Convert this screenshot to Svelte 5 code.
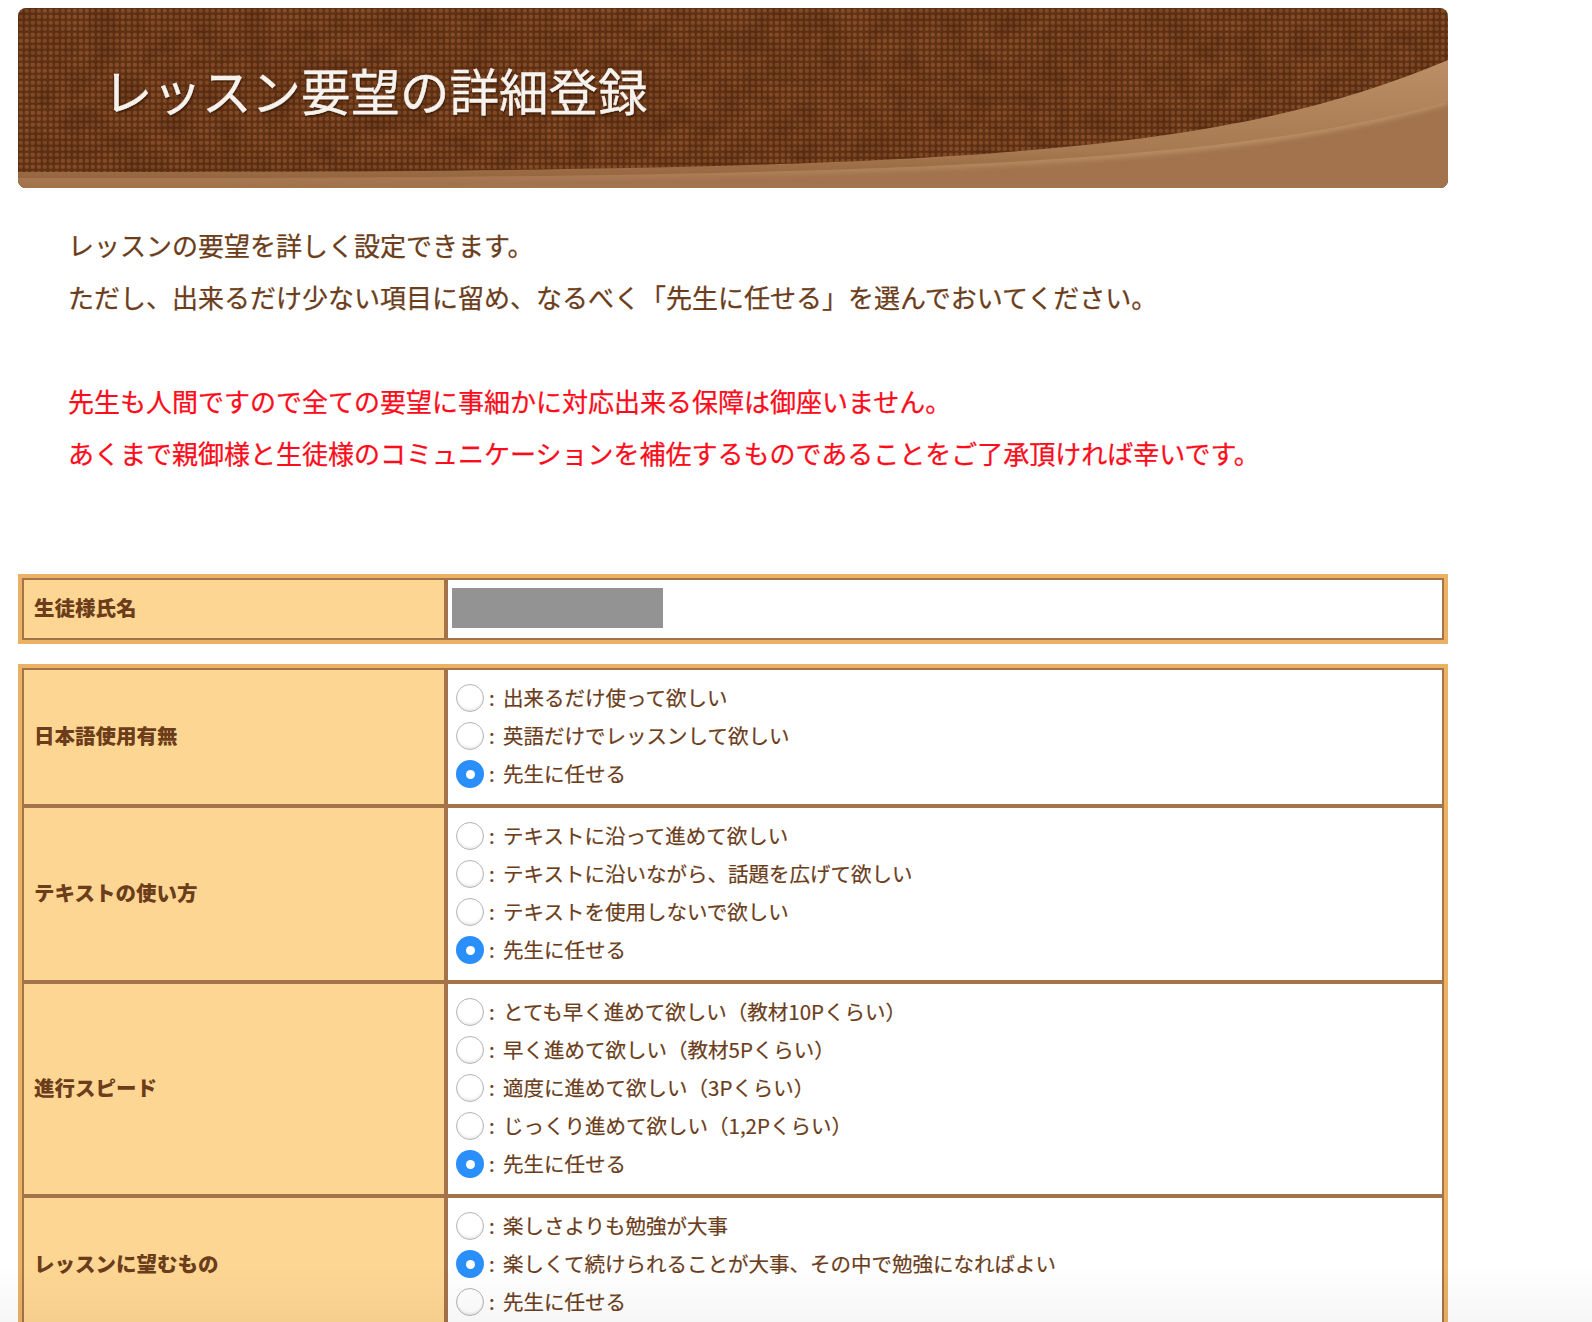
<script>
  const groups = [
    {
      label: "日本語使用有無",
      options: ["出来るだけ使って欲しい", "英語だけでレッスンして欲しい", "先生に任せる"],
      selected: 2,
    },
    {
      label: "テキストの使い方",
      options: [
        "テキストに沿って進めて欲しい",
        "テキストに沿いながら、話題を広げて欲しい",
        "テキストを使用しないで欲しい",
        "先生に任せる",
      ],
      selected: 3,
    },
    {
      label: "進行スピード",
      options: [
        "とても早く進めて欲しい（教材10Pくらい）",
        "早く進めて欲しい（教材5Pくらい）",
        "適度に進めて欲しい（3Pくらい）",
        "じっくり進めて欲しい（1,2Pくらい）",
        "先生に任せる",
      ],
      selected: 4,
    },
    {
      label: "レッスンに望むもの",
      options: [
        "楽しさよりも勉強が大事",
        "楽しくて続けられることが大事、その中で勉強になればよい",
        "先生に任せる",
      ],
      selected: 1,
    },
  ];
</script>

<div class="page">
  <header class="banner">
    <svg class="wave" viewBox="0 0 1430 180" preserveAspectRatio="none" aria-hidden="true">
      <defs>
        <pattern id="weave" width="6" height="6" patternUnits="userSpaceOnUse">
          <rect width="6" height="6" fill="#5f3115" />
          <rect x="0.8" y="0.8" width="4" height="4" rx="1.4" fill="#854c26" />
        </pattern>
        <linearGradient id="swoosh" x1="0" y1="0" x2="0" y2="1">
          <stop offset="0" stop-color="#bd8f66" />
          <stop offset="0.7" stop-color="#a87a52" />
          <stop offset="1" stop-color="#8f5f38" />
        </linearGradient>
        <linearGradient id="glow" x1="0" y1="0" x2="1" y2="0">
          <stop offset="0.3" stop-color="#bd9068" stop-opacity="0.15" />
          <stop offset="0.85" stop-color="#bd9068" />
        </linearGradient>
        <filter id="soft" x="-5%" y="-20%" width="110%" height="140%">
          <feGaussianBlur stdDeviation="2.5" />
        </filter>
        <filter id="mottle" x="0" y="0" width="100%" height="100%" color-interpolation-filters="sRGB">
          <feTurbulence type="fractalNoise" baseFrequency="0.04" numOctaves="2" seed="4" />
          <feColorMatrix values="0 0 0 0 0.22  0 0 0 0 0.09  0 0 0 0 0.02  0.5 0 0 0 -0.17" />
        </filter>
        <clipPath id="lower">
          <path d="M0 170 C950 172 1230 150 1430 93 V180 H0 Z" />
        </clipPath>
      </defs>
      <rect width="1430" height="180" fill="url(#weave)" />
      <rect width="1430" height="180" filter="url(#mottle)" />
      <path d="M0 164 C950 165 1200 148 1430 52 V180 H0 Z" fill="url(#swoosh)" />
      <path d="M0 170 C950 172 1230 150 1430 93 V180 H0 Z" fill="#a2734c" />
      <path
        d="M0 170 C950 172 1230 150 1430 93"
        fill="none"
        stroke="url(#glow)"
        stroke-width="7"
        filter="url(#soft)"
        clip-path="url(#lower)"
      />
    </svg>
    <h1>レッスン要望の詳細登録</h1>
  </header>

  <section class="intro">
    <p>レッスンの要望を詳しく設定できます。</p>
    <p>ただし、出来るだけ少ない項目に留め、なるべく「先生に任せる」を選んでおいてください。</p>
    <p class="gap red">先生も人間ですので全ての要望に事細かに対応出来る保障は御座いません。</p>
    <p class="red">あくまで親御様と生徒様のコミュニケーションを補佐するものであることをご了承頂ければ幸いです。</p>
  </section>

  <div class="table name-table">
    <div class="row">
      <div class="head"><span>生徒様氏名</span></div>
      <div class="cell name-cell"><div class="redacted"></div></div>
    </div>
  </div>

  <div class="table">
    {#each groups as group}
      <div class="row">
        <div class="head"><span>{group.label}</span></div>
        <div class="cell options">
          {#each group.options as option, i}
            <div class="option">
              <span class="radio" class:on={i === group.selected}></span>
              <span class="colon">:</span>
              <span class="text">{option}</span>
            </div>
          {/each}
        </div>
      </div>
    {/each}
  </div>
</div>
<div class="fade"></div>

<style>
  :global(body) {
    margin: 0;
    background: #fff;
    overflow: hidden;
  }

  .page {
    width: 1430px;
    height: 1314px;
    padding: 8px 0 0 18px;
    overflow: hidden;
    color: #6b3d1a;
    font-family: "Noto Sans CJK JP", "Noto Sans", sans-serif;
  }

  .banner {
    position: relative;
    height: 180px;
    border-radius: 8px;
    overflow: hidden;
  }

  .wave {
    position: absolute;
    inset: 0;
    width: 100%;
    height: 100%;
  }

  h1 {
    position: relative;
    margin: 0;
    padding: 47px 0 0 85px;
    font-size: 49.5px;
    font-weight: 400;
    line-height: 70px;
    color: #f6f2ee;
    -webkit-text-stroke: 0.4px #f6f2ee;
    text-shadow: 1px 2px 2px rgba(50, 20, 0, 0.7);
    white-space: nowrap;
  }

  .intro {
    box-sizing: border-box;
    height: 386px;
    padding: 31px 0 0 50px;
    font-size: 26px;
    -webkit-text-stroke: 0.25px currentColor;
  }

  .intro p {
    margin: 0;
    line-height: 52px;
    white-space: nowrap;
  }

  .intro .gap {
    margin-top: 52px;
  }

  .red {
    color: #fb0d1b;
  }

  .table {
    border: 4px solid #ebb265;
    background: #a5734a;
    display: flex;
    flex-direction: column;
    gap: 4px;
    padding: 2px;
  }

  .name-table {
    margin-bottom: 20px;
  }

  .row {
    display: flex;
    gap: 4px;
  }

  .head {
    width: 420px;
    flex: none;
    box-sizing: border-box;
    padding: 0 0 4px 10px;
    display: flex;
    align-items: center;
    background: #fed694;
    font-size: 20.5px;
    font-weight: 900;
  }

  .cell {
    flex: 1;
    background: #fff;
  }

  .name-cell {
    height: 58px;
    box-sizing: border-box;
    padding: 8px 4px;
  }

  .redacted {
    width: 211px;
    height: 40px;
    background: #939393;
  }

  .options {
    padding: 9px 0 11px 8px;
  }

  .option {
    display: flex;
    align-items: center;
    height: 38px;
    font-size: 20.5px;
    -webkit-text-stroke: 0.2px currentColor;
    white-space: nowrap;
  }

  .text {
    padding-bottom: 2px;
  }

  .radio {
    width: 28px;
    height: 28px;
    box-sizing: border-box;
    border-radius: 50%;
    border: 1.5px solid #b4b4b4;
    background: #fff;
    box-shadow: inset 0 -2px 2px rgba(0, 0, 0, 0.08);
    flex: none;
    display: flex;
    align-items: center;
    justify-content: center;
  }

  .radio.on {
    border: none;
    background: #2a8ffa;
    box-shadow: none;
  }

  .radio.on::after {
    content: "";
    width: 9px;
    height: 9px;
    border-radius: 50%;
    background: #fff;
  }

  .colon {
    width: 19px;
    padding: 0 0 2px 5px;
    box-sizing: border-box;
  }

  .fade {
    position: fixed;
    left: 0;
    right: 0;
    bottom: 0;
    height: 55px;
    pointer-events: none;
    background: linear-gradient(rgba(0, 0, 0, 0), rgba(0, 0, 0, 0.035));
  }
</style>
